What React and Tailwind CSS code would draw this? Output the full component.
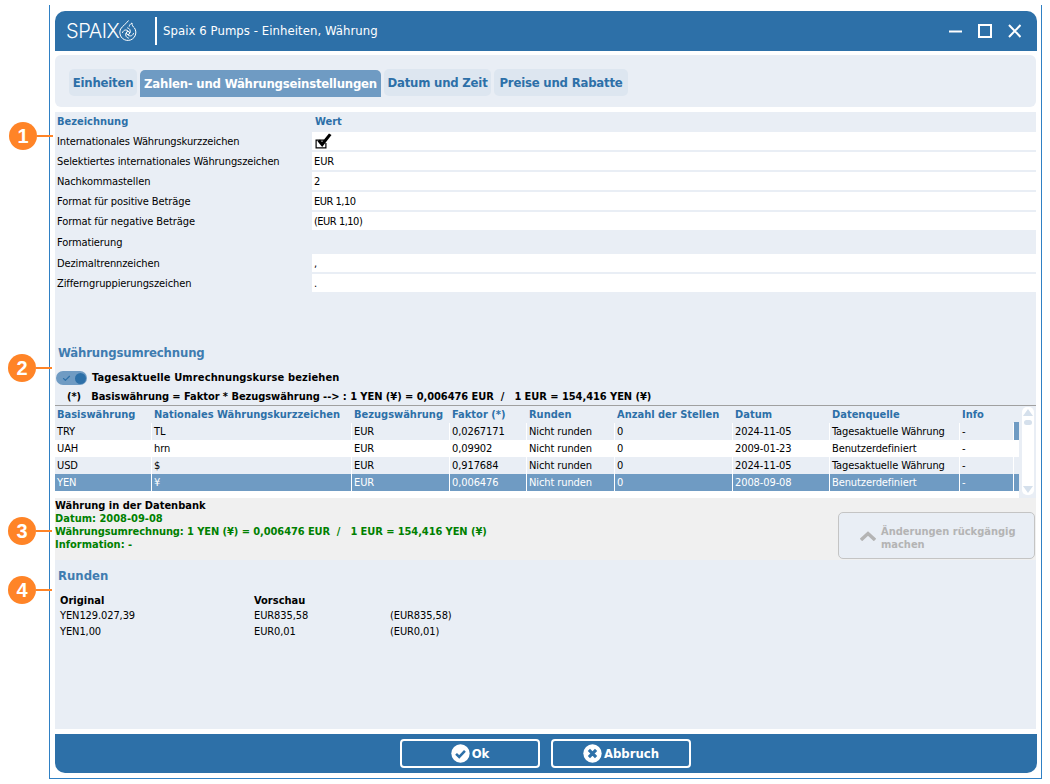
import React from "react";
import { Check } from "lucide-react";

const settings = [
  { label: "Internationales Währungskurzzeichen", check: true },
  { label: "Selektiertes internationales Währungszeichen", value: "EUR" },
  { label: "Nachkommastellen", value: "2" },
  { label: "Format für positive Beträge", value: "EUR 1,10", tight: true },
  { label: "Format für negative Beträge", value: "(EUR 1,10)", tight: true },
];

const gridCols = "grid grid-cols-[97px_200px_98px_77px_88px_118px_97px_130px_54px_5px]";

const headers = [
  "Basiswährung",
  "Nationales Währungskurzzeichen",
  "Bezugswährung",
  "Faktor (*)",
  "Runden",
  "Anzahl der Stellen",
  "Datum",
  "Datenquelle",
  "Info",
];

const rates = [
  ["TRY", "TL", "EUR", "0,0267171", "Nicht runden", "0", "2024-11-05", "Tagesaktuelle Währung", "-"],
  ["UAH", "hrn", "EUR", "0,09902", "Nicht runden", "0", "2009-01-23", "Benutzerdefiniert", "-"],
  ["USD", "$", "EUR", "0,917684", "Nicht runden", "0", "2024-11-05", "Tagesaktuelle Währung", "-"],
  ["YEN", "¥", "EUR", "0,006476", "Nicht runden", "0", "2008-09-08", "Benutzerdefiniert", "-"],
];

function Badge({ n, top, left = 8 }) {
  return (
    <div className="absolute flex items-center" style={{ top, left }}>
      <div className="w-[28px] h-[28px] rounded-full bg-[#ff8427] text-white flex items-center justify-center text-[20px] font-bold font-['Liberation_Sans',sans-serif]">
        {n}
      </div>
      <div className="w-[16px] h-[2px] bg-[#ff8427]" />
    </div>
  );
}

function Tab({ children, active, className }) {
  return (
    <div
      className={
        active
          ? "h-[27px] mt-[1px] rounded-t-[5px] bg-[#6f9bc3] text-white flex items-center justify-center " + className
          : "h-[27px] rounded-[5px] bg-[#dde6f0] text-[#2d70a8] flex items-center justify-center " + className
      }
    >
      {children}
    </div>
  );
}

function Swirl() {
  return (
    <svg width="18" height="21" viewBox="0 0 18 21" fill="none" stroke="#fff" strokeWidth="1">
      <path d="M9.5 0.5 C7.5 3.5 3.5 6 1.6 9 A8 8 0 1 0 15.5 8 C14 6.8 12.8 5 13 3 C11.2 4 10.2 5.4 10.2 6.6" />
      <circle cx="9" cy="13" r="1.6" />
      <path d="M9 11 C6.5 8.8 4 10.5 3.4 13 M11 13 C12 10.4 10.5 8.2 8.2 7.8 M9 15 C11.5 17 14 15.5 14.6 13 M7 13 C6 15.5 7.5 17.8 9.8 18.2" />
    </svg>
  );
}

function WindowIcons() {
  return (
    <svg width="72" height="14" viewBox="0 0 72 14" fill="none" stroke="#fff" strokeWidth="2">
      <path d="M0 7.5h13" />
      <rect x="30" y="1" width="12" height="12" />
      <path d="M60 1l11.5 12M71.5 1L60 13" />
    </svg>
  );
}

export default function App() {
  return (
    <div className="w-[1050px] h-[784px] bg-white relative overflow-hidden font-['DejaVu_Sans_Condensed','DejaVu_Sans',sans-serif] text-[11px] leading-[14px] tracking-[-0.1px] text-black">
      <div className="ml-[49px] mt-[5px] w-[993px] h-[774px] border-x border-b border-[#2f80c4] pl-[5px] pr-[3px] pt-[6px] absolute">
        {/* title bar */}
        <div className="h-[40px] w-[982px] bg-[#2d70a8] rounded-t-[10px] text-white flex items-center">
          <div className="ml-[11px] w-[52px] text-[20px] tracking-[-0.5px] font-['Inter',sans-serif] font-light leading-none">SPAIX</div>
          <div className="ml-[1px] mb-[1px]">
            <Swirl />
          </div>
          <div className="ml-[18px] h-[28px] w-[2px] bg-white" />
          <div className="ml-[6px] text-[13px] tracking-[0.06px]">Spaix 6 Pumps - Einheiten, Währung</div>
          <div className="ml-auto mr-[16px]">
            <WindowIcons />
          </div>
        </div>

        {/* tabs */}
        <div className="mt-[4px] h-[52px] w-[981px] bg-[#e9eef5] rounded-[6px] pt-[14px] pl-[14px] flex gap-[3px] font-bold text-[13px] tracking-[-0.2px]">
          <Tab className="w-[68px]">Einheiten</Tab>
          <Tab active className="w-[241px]">Zahlen- und Währungseinstellungen</Tab>
          <Tab className="w-[107px]">Datum und Zeit</Tab>
          <Tab className="w-[134px]">Preise und Rabatte</Tab>
        </div>

        {/* settings */}
        <div className="mt-[5px] w-[981px] bg-[#e9eef5] h-[448px]">
          <div className="h-[20px] flex items-center font-bold text-[#2d70a8] tracking-normal">
            <div className="w-[260px] pl-[2px]">Bezeichnung</div>
            <div>Wert</div>
          </div>
          <div>
            {settings.map((s) => (
              <div key={s.label} className="h-[20px] flex">
                <div className="w-[257px] pl-[2px] pt-[2px] h-[18px] flex items-center">{s.label}</div>
                <div className={"flex-1 h-[18px] bg-white pl-[2px] pt-[2px] flex items-center " + (s.tight ? "tracking-[-0.5px]" : "")}>
                  {s.check ? (
                    <svg width="17" height="16" viewBox="0 0 17 16" className="ml-[1px] mb-[2px]">
                      <path d="M0.5 6.5h8.5v1.2H1.7v6.6h8.6V10h1.2v5.5H0.5z" fill="#000" />
                      <path d="M2.5 8.2 L5 6.6 L7 9 L14 0.5 L16.5 2 L7.2 14 Z" fill="#000" />
                    </svg>
                  ) : (
                    s.value
                  )}
                </div>
              </div>
            ))}
          </div>
          <div className="h-[22px] pl-[2px] flex items-center">Formatierung</div>
          <div className="h-[20px] flex">
            <div className="w-[257px] pl-[2px] pt-[2px] h-[18px] flex items-center">Dezimaltrennzeichen</div>
            <div className="flex-1 h-[18px] bg-white pl-[2px] pt-[2px] flex items-center">,</div>
          </div>
          <div className="h-[18px] flex">
            <div className="w-[257px] pl-[2px] pt-[2px] flex items-center">Zifferngruppierungszeichen</div>
            <div className="flex-1 bg-white pl-[2px] pt-[2px] flex items-center">.</div>
          </div>

          {/* conversion */}
          <div className="mt-[54px] pl-[3px] text-[13px] font-bold text-[#3f7cb0] tracking-[-0.15px]">Währungsumrechnung</div>
          <div className="mt-[10px] h-[16px] flex items-center pl-[1px]">
            <div className="w-[31px] h-[14px] rounded-full bg-[#6f9bc3] flex items-center justify-between pl-[6px] pr-[1px]">
              <Check size={9} strokeWidth={3} className="text-[#2d70a8]" />
              <div className="w-[11px] h-[11px] rounded-full bg-[#2d70a8]" />
            </div>
            <div className="ml-[5px] font-bold tracking-[0.13px]">Tagesaktuelle Umrechnungskurse beziehen</div>
          </div>
          <div className="mt-[2px] h-[17px] pl-[12px] font-bold flex items-center whitespace-pre tracking-[-0.05px]">
            (*)   Basiswährung = Faktor * Bezugswährung --&gt; : 1 YEN (¥) = 0,006476 EUR  /   1 EUR = 154,416 YEN (¥)
          </div>

          <div className="flex border-t border-[#a0a0a0] w-[981px] relative">
            <div className="w-[964px] bg-white relative">
              <div className={gridCols + " h-[17px] bg-[#e9eef5] font-bold text-[#2d70a8] tracking-normal"}>
                {headers.map((h) => (
                  <div key={h} className="px-[2px] flex items-center whitespace-nowrap">{h}</div>
                ))}
              </div>
              {rates.map((r, i) => (
                <div
                  key={r[0]}
                  className={
                    gridCols +
                    " h-[17px] " +
                    (i === 3 ? "bg-[#6f9bc3] text-white" : i % 2 === 0 ? "bg-[#e9eef5]" : "bg-white")
                  }
                >
                  {r.map((c, j) => (
                    <div key={j} className="px-[2px] flex items-center whitespace-nowrap border-r border-white">{c}</div>
                  ))}
                </div>
              ))}
              <div className="h-[7px] bg-white" />
              {/* position marker of the list */}
              <div className="absolute left-[959px] top-[16px] w-[5px] h-[18px] bg-[#6f9bc3]" />
            </div>
            <div className="ml-[3px] mt-[1px] w-[12px] h-[88px] bg-white rounded-[5px] flex flex-col items-center justify-between py-[2px] relative">
              <div className="w-0 h-0 border-x-[5px] border-x-transparent border-b-[7px] border-b-[#d5e0ec]" />
              <div className="absolute top-[13px] w-[8px] h-[5px] rounded-full bg-[#d5e0ec]" />
              <div className="w-0 h-0 border-x-[5px] border-x-transparent border-t-[7px] border-t-[#d5e0ec]" />
            </div>
          </div>

          {/* database */}
          <div className="w-[981px] h-[62px] bg-[#f0f0f0] flex font-bold">
            <div className="pt-[1px] leading-[13px]">
              <div className="text-black tracking-normal">Währung in der Datenbank</div>
              <div className="text-[#008000] tracking-normal">Datum: 2008-09-08</div>
              <div className="text-[#008000] whitespace-pre tracking-[-0.08px]">Währungsumrechnung: 1 YEN (¥) = 0,006476 EUR  /   1 EUR = 154,416 YEN (¥)</div>
              <div className="text-[#008000] tracking-normal">Information: -</div>
            </div>
            <div className="ml-auto mt-[14px] mr-[1px] w-[197px] h-[47px] rounded-[5px] border border-[#c4c4c4] bg-[#e9eef5] text-[#b4b4b4] flex items-center pl-[21px] leading-[13px] tracking-normal">
              <svg width="16" height="10" viewBox="0 0 16 10" fill="none" stroke="#b4b4b4" strokeWidth="3.4" className="shrink-0">
                <path d="M1 9 L8 2.5 L15 9" />
              </svg>
              <div className="ml-[5px] w-[140px] pt-[4px]">Änderungen rückgängig machen</div>
            </div>
          </div>
        </div>

        {/* rounding */}
        <div className="w-[981px] h-[169px] bg-[#e9eef5]">
          <div className="pt-[9px] pl-[3px] text-[13px] font-bold text-[#3f7cb0] tracking-normal">Runden</div>
          <div className="mt-[10px] pl-[5px] grid grid-cols-[194px_136px_200px] grid-rows-[15px_16px_16px] leading-[16px]">
            <div className="font-bold tracking-normal">Original</div>
            <div className="font-bold tracking-normal">Vorschau</div>
            <div />
            <div>YEN129.027,39</div>
            <div>EUR835,58</div>
            <div>(EUR835,58)</div>
            <div>YEN1,00</div>
            <div>EUR0,01</div>
            <div>(EUR0,01)</div>
          </div>
        </div>

        {/* footer */}
        <div className="mt-[5px] h-[39px] w-[982px] bg-[#2d70a8] rounded-b-[10px] flex items-center pl-[345px] gap-[11px] text-white font-bold text-[13px] tracking-normal">
          <div className="w-[140px] h-[29px] border-[2px] border-white rounded-[4px] flex items-center justify-center gap-[2px]">
            <svg width="19" height="19" viewBox="0 0 18 18">
              <circle cx="9" cy="9" r="8.7" fill="#fff" />
              <path d="M4.8 9.3 L7.8 12.3 L13.2 6.6" fill="none" stroke="#2d70a8" strokeWidth="2.4" />
            </svg>
            Ok
          </div>
          <div className="w-[140px] h-[29px] border-[2px] border-white rounded-[4px] flex items-center justify-center gap-[2px]">
            <svg width="19" height="19" viewBox="0 0 18 18">
              <circle cx="9" cy="9" r="8.7" fill="#fff" />
              <path d="M5.6 5.6 L12.4 12.4 M12.4 5.6 L5.6 12.4" fill="none" stroke="#2d70a8" strokeWidth="3" />
            </svg>
            Abbruch
          </div>
        </div>
      </div>

      <Badge n="1" top={122} left={9} />
      <Badge n="2" top={354} />
      <Badge n="3" top={517} />
      <Badge n="4" top={576} />
    </div>
  );
}
